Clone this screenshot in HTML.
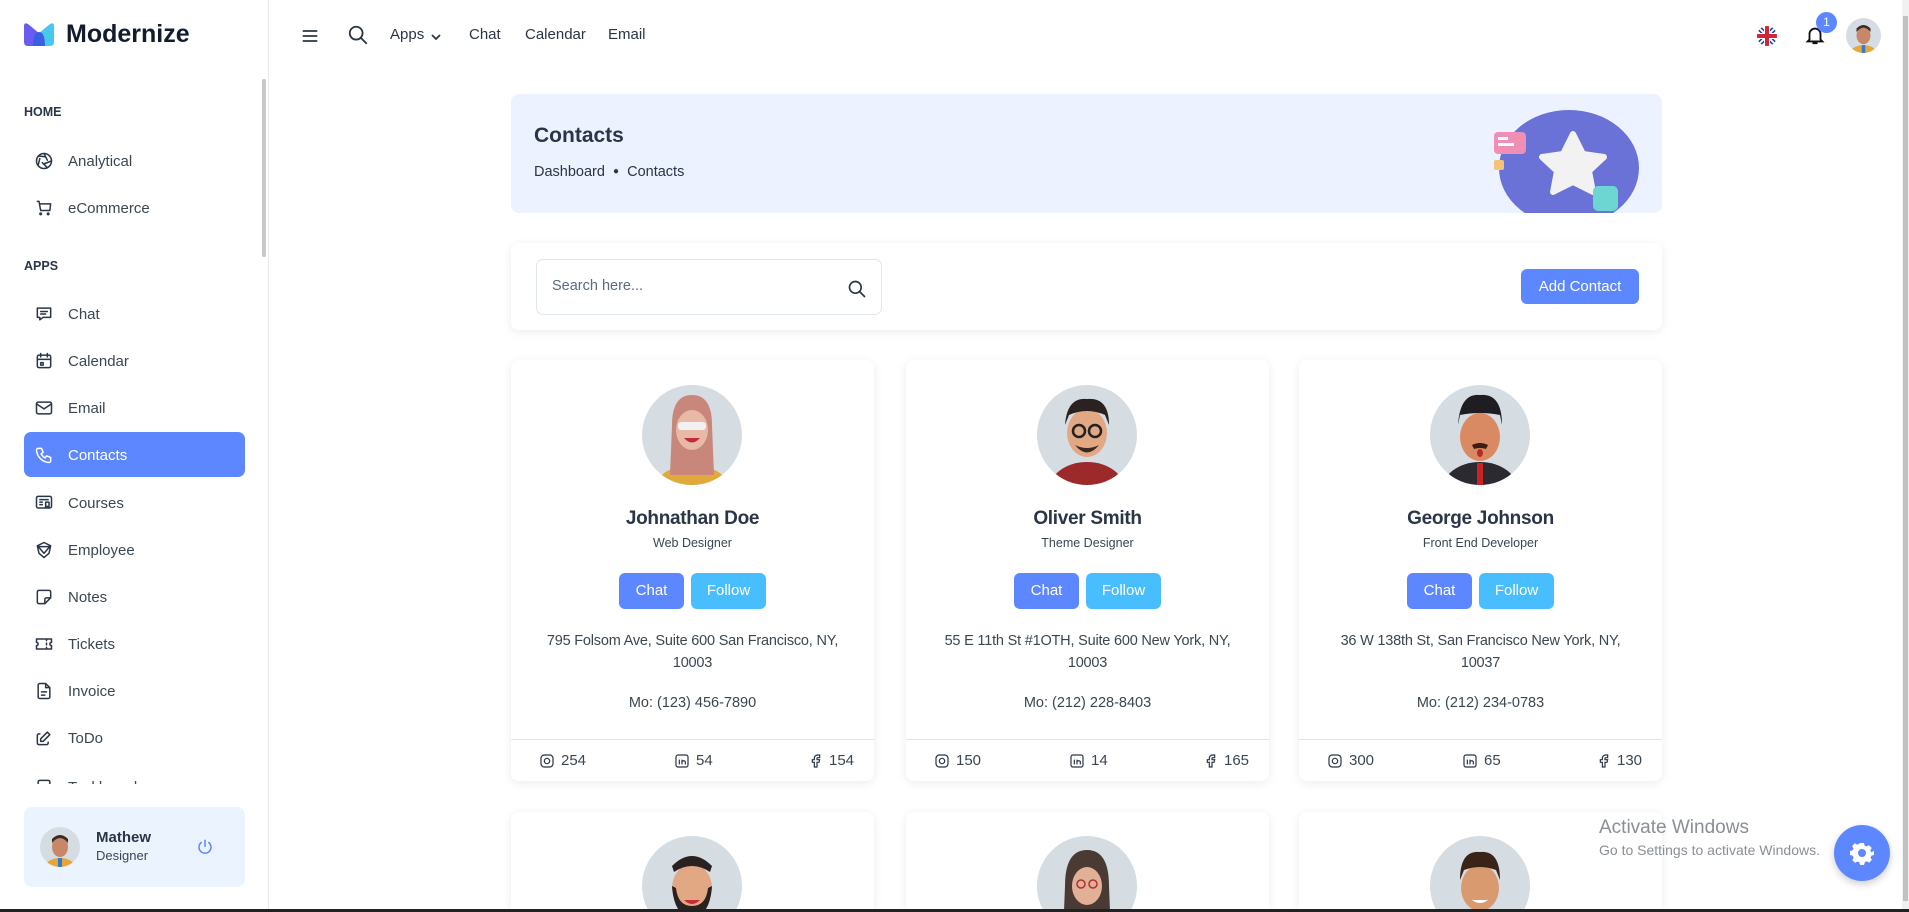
<!DOCTYPE html>
<html style="width:1909px;height:912px;overflow:hidden"><head><meta charset="utf-8"><style>
*{margin:0;padding:0;box-sizing:border-box}
body{width:1909px;height:912px;overflow:hidden;background:#fff;font-family:"Liberation Sans",sans-serif;color:#2a3547;position:relative}
.a{position:absolute}
.side{left:0;top:0;width:269px;height:909px;border-right:1px solid #e5eaef;background:#fff}
.nav{left:34px;font-size:15px;color:#3a4752;display:flex;align-items:center;gap:14px;height:24px}
.nav svg{width:20px;height:20px;fill:none;stroke:#2a3547;stroke-width:1.8;stroke-linecap:round;stroke-linejoin:round}
.cap{left:24px;font-size:12.5px;font-weight:bold;color:#2a3547}
.top{font-size:15px;color:#2a3547;top:26px}
.card{background:#fff;border-radius:8px;box-shadow:0 2px 10px rgba(0,0,0,.08)}
.c{width:363px;height:421px;top:360px}
.av{position:absolute;left:131px;top:25px;width:100px;height:100px;border-radius:50%;background:#d5dde3;overflow:hidden}
.nm{position:absolute;top:148px;width:100%;text-align:center;font-size:19px;font-weight:bold;color:#2a3547;letter-spacing:-0.3px}
.rl{position:absolute;top:176px;width:100%;text-align:center;font-size:12.5px;color:#3a4752}
.bt{position:absolute;top:213px;height:36px;border-radius:6px;color:#fff;font-size:15px;text-align:center;line-height:36px}
.ad{position:absolute;top:270px;left:20px;right:20px;text-align:center;font-size:14.5px;line-height:22px;color:#3a4752;letter-spacing:-0.2px}
.mo{position:absolute;top:335px;width:100%;text-align:center;font-size:14.5px;color:#3a4752}
.ft{position:absolute;top:379px;left:0;right:0;height:42px;border-top:1px solid #e0e6eb;font-size:15px;color:#3a4752}
.ft span{position:absolute;top:12px;display:flex;align-items:center;gap:6px}
.ft svg{width:16px;height:16px;fill:none;stroke:#2a3547;stroke-width:1.8}
.c2{width:363px;height:97px;top:812px;border-radius:8px 8px 0 0;overflow:hidden}
.av2{position:absolute;left:131px;top:24px;width:100px;height:100px;border-radius:50%;background:#d5dde3;overflow:hidden}
</style></head><body>

<div class="a side">
  <div class="a" style="left:22px;top:22px;width:34px;height:26px">
    <svg width="34" height="26" viewBox="0 0 34 26"><path d="M2 4 Q2 0 6 2 L18 12 L18 24 L6 24 Q2 24 2 20Z" fill="#6a5cf0"/><path d="M32 4 Q32 0 28 2 L16 12 L16 24 L28 24 Q32 24 32 20Z" fill="#49c8ef"/><path d="M11 24 Q11 10 17 10 Q23 10 23 24Z" fill="#3a5fe0"/></svg>
  </div>
  <div class="a" style="left:66px;top:20px;font-size:25px;font-weight:bold;color:#111c2d">Modernize</div>
  <div class="a" style="left:262px;top:79px;width:4px;height:178px;background:#c9c9c9;border-radius:2px"></div>
  <div class="a cap" style="top:105px">HOME</div>
  <div class="a nav" style="top:149px"><svg viewBox="0 0 24 24"><circle cx="12" cy="12" r="9"/><path d="M12 3l4 8M21 12l-8 3M16 20l-6-6M5 17l2-8M6 6l8 1"/></svg>Analytical</div>
  <div class="a nav" style="top:196px"><svg viewBox="0 0 24 24"><path d="M4 4h2l2 11h11l1-8H7M9 19a1 1 0 1 0 0 .1M18 19a1 1 0 1 0 0 .1"/></svg>eCommerce</div>
  <div class="a cap" style="top:259px">APPS</div>
  <div class="a nav" style="top:302px"><svg viewBox="0 0 24 24"><path d="M4 5h16v11h-9l-4 3v-3H4zM8 9h8M8 12h6"/></svg>Chat</div>
  <div class="a nav" style="top:349px"><svg viewBox="0 0 24 24"><rect x="4" y="5" width="16" height="15" rx="2"/><path d="M8 3v4M16 3v4M4 10h16M8 14h3v3H8z"/></svg>Calendar</div>
  <div class="a nav" style="top:396px"><svg viewBox="0 0 24 24"><rect x="3" y="5" width="18" height="14" rx="2"/><path d="M3 7l9 6 9-6"/></svg>Email</div>
  <div class="a" style="left:24px;top:432px;width:221px;height:45px;background:#5d87ff;border-radius:7px"></div>
  <div class="a nav" style="top:443px;color:#fff"><svg viewBox="0 0 24 24" style="stroke:#fff"><path d="M5 4h4l2 5-2.5 1.5a11 11 0 0 0 5 5L15 13l5 2v4a2 2 0 0 1-2 2A16 16 0 0 1 3 6a2 2 0 0 1 2-2"/></svg>Contacts</div>
  <div class="a nav" style="top:491px"><svg viewBox="0 0 24 24"><rect x="3" y="4" width="18" height="14" rx="2"/><path d="M7 8h10M7 11h3M7 14h3M14 11h4v6l-2-1-2 1z"/></svg>Courses</div>
  <div class="a nav" style="top:538px"><svg viewBox="0 0 24 24"><path d="M12 3l8 4-2 9-6 5-6-5-2-9zM5 8l14 0M6 9l6 7 6-7"/></svg>Employee</div>
  <div class="a nav" style="top:585px"><svg viewBox="0 0 24 24"><path d="M13 20H6a2 2 0 0 1-2-2V6a2 2 0 0 1 2-2h12a2 2 0 0 1 2 2v7l-7 7v-5a2 2 0 0 1 2-2h5"/></svg>Notes</div>
  <div class="a nav" style="top:632px"><svg viewBox="0 0 24 24"><path d="M3 6h18v4a2 2 0 0 0 0 4v4H3v-4a2 2 0 0 0 0-4zM15 6v2M15 11v2M15 16v2"/></svg>Tickets</div>
  <div class="a nav" style="top:679px"><svg viewBox="0 0 24 24"><path d="M14 3H7a2 2 0 0 0-2 2v14a2 2 0 0 0 2 2h10a2 2 0 0 0 2-2V8zM14 3v5h5M9 13h6M9 17h4"/></svg>Invoice</div>
  <div class="a nav" style="top:726px"><svg viewBox="0 0 24 24"><path d="M7 7H6a2 2 0 0 0-2 2v9a2 2 0 0 0 2 2h9a2 2 0 0 0 2-2v-1M16 5l3 3-8 8H8v-3z"/></svg>ToDo</div>
  <div class="a" style="left:24px;top:775px;width:220px;height:9px;overflow:hidden"><div class="nav" style="position:absolute;left:10px;top:0">
    <svg viewBox="0 0 24 24"><rect x="5" y="4" width="14" height="16" rx="2"/></svg>Taskboard</div></div>
  <div class="a" style="left:24px;top:807px;width:221px;height:80px;background:#ebf3fe;border-radius:8px">
    <div class="a" style="left:16px;top:20px;width:40px;height:40px;border-radius:50%;background:#d5dde3;overflow:hidden">
      <svg width="40" height="40" viewBox="0 0 40 40"><ellipse cx="20" cy="40" rx="15" ry="9" fill="#e7a63a"/><rect x="18" y="31" width="4" height="9" fill="#2e7bd6"/><ellipse cx="20" cy="20" rx="8" ry="10" fill="#c9876a"/><path d="M12 16 Q20 6 28 16 L28 12 Q20 4 12 12Z" fill="#3a2a22"/></svg>
    </div>
    <div class="a" style="left:72px;top:22px;font-size:15px;font-weight:bold;color:#2a3547">Mathew</div>
    <div class="a" style="left:72px;top:41px;font-size:13px;color:#3a4752">Designer</div>
    <svg class="a" style="left:172px;top:31px" width="18" height="18" viewBox="0 0 24 24" fill="none" stroke="#5d87ff" stroke-width="2" stroke-linecap="round"><path d="M7 6a8 8 0 1 0 10 0M12 3v8"/></svg>
  </div>
</div>

<svg class="a" style="left:300px;top:26px" width="20" height="20" viewBox="0 0 24 24" fill="none" stroke="#2a3547" stroke-width="2" stroke-linecap="round"><path d="M4 6h16M4 12h16M4 18h16"/></svg>
<svg class="a" style="left:347px;top:24px" width="22" height="22" viewBox="0 0 24 24" fill="none" stroke="#2a3547" stroke-width="2" stroke-linecap="round"><circle cx="10" cy="10" r="7"/><path d="M15 15l6 6"/></svg>
<div class="a top" style="left:390px">Apps</div>
<svg class="a" style="left:430px;top:32px" width="12" height="10" viewBox="0 0 12 10" fill="none" stroke="#2a3547" stroke-width="1.8"><path d="M2 3l4 4 4-4"/></svg>
<div class="a top" style="left:469px">Chat</div>
<div class="a top" style="left:525px">Calendar</div>
<div class="a top" style="left:608px">Email</div>
<svg class="a" style="left:1756px;top:25px" width="22" height="22" viewBox="0 0 22 22"><defs><clipPath id="fc"><circle cx="11" cy="11" r="10"/></clipPath></defs><g clip-path="url(#fc)"><rect width="22" height="22" fill="#fff"/><path d="M0 0L22 22M22 0L0 22" stroke="#1a3a9a" stroke-width="5"/><path d="M0 0L22 22M22 0L0 22" stroke="#fff" stroke-width="2"/><rect x="8" y="0" width="6" height="22" fill="#fff"/><rect x="0" y="8" width="22" height="6" fill="#fff"/><rect x="9" y="0" width="4" height="22" fill="#d4243a"/><rect x="0" y="9" width="22" height="4" fill="#d4243a"/></g></svg>
<svg class="a" style="left:1804px;top:24px" width="22" height="22" viewBox="0 0 24 24" fill="none" stroke="#111" stroke-width="2" stroke-linecap="round"><path d="M6 17V11a6 6 0 0 1 12 0v6l2 2H4zM10 21h4"/></svg>
<div class="a" style="left:1816px;top:12px;width:21px;height:21px;border-radius:50%;background:#5d87ff;color:#fff;font-size:12px;text-align:center;line-height:21px">1</div>
<div class="a" style="left:1846px;top:18px;width:35px;height:35px;border-radius:50%;background:#d5dde3;overflow:hidden">
  <svg width="35" height="35" viewBox="0 0 40 40"><ellipse cx="20" cy="40" rx="15" ry="9" fill="#e7a63a"/><rect x="18" y="31" width="4" height="9" fill="#2e7bd6"/><ellipse cx="20" cy="20" rx="8" ry="10" fill="#c9876a"/><path d="M12 16 Q20 6 28 16 L28 12 Q20 4 12 12Z" fill="#3a2a22"/></svg>
</div>
<div class="a" style="left:1902px;top:0;width:7px;height:909px;background:#f1f1f1"></div>
<div class="a" style="left:1903px;top:16px;width:5px;height:885px;background:#c1c1c1"></div>

<div class="a" style="left:511px;top:94px;width:1151px;height:119px;background:#ecf2ff;border-radius:8px;overflow:hidden">
  <div class="a" style="left:23px;top:30px;font-size:21px;font-weight:bold;color:#2a3547">Contacts</div>
  <div class="a" style="left:23px;top:70px;font-size:14.5px;color:#2a3547">Dashboard &nbsp;<span style="font-size:10px;vertical-align:2px">&#9679;</span>&nbsp; Contacts</div>
  <svg class="a" style="left:965px;top:10px" width="180" height="110" viewBox="0 0 180 110"><ellipse cx="93" cy="64" rx="70" ry="58" fill="#6a72d8"/><path d="M97 30l10 20 21 3-15 14 4 21-20-10-20 10 4-21-15-14 21-3z" fill="#f2f2f2" stroke="#f2f2f2" stroke-width="6" stroke-linejoin="round"/><rect x="18" y="28" width="32" height="22" rx="4" fill="#ef8fb5"/><rect x="22" y="33" width="10" height="3" fill="#fff"/><rect x="22" y="39" width="16" height="3" fill="#fff"/><rect x="18" y="56" width="10" height="10" rx="2" fill="#f5c27a"/><rect x="117" y="82" width="25" height="25" rx="5" fill="#6ed6d2"/></svg>
</div>

<div class="a card" style="left:511px;top:243px;width:1151px;height:87px">
  <div class="a" style="left:25px;top:16px;width:346px;height:56px;border:1px solid #dfe5ef;border-radius:7px">
    <div class="a" style="left:15px;top:18px;font-size:14.5px;color:#5a6a85">Search here...</div>
    <svg class="a" style="left:310px;top:19px" width="20" height="20" viewBox="0 0 24 24" fill="none" stroke="#2a3547" stroke-width="2" stroke-linecap="round"><circle cx="10" cy="10" r="7"/><path d="M15 15l6 6"/></svg>
  </div>
  <div class="a" style="left:1010px;top:26px;width:118px;height:35px;border-radius:6px;background:#5d87ff;color:#fff;font-size:15px;text-align:center;line-height:35px">Add Contact</div>
</div>

<div class="a card c" style="left:511px">
  <div class="av"><svg width="100" height="100" viewBox="0 0 100 100"><ellipse cx="50" cy="105" rx="38" ry="25" fill="#e0a93a"/><path d="M30 40 Q30 10 50 10 Q70 10 70 40 L72 90 L28 90Z" fill="#c8877a"/><ellipse cx="50" cy="45" rx="16" ry="20" fill="#e7b9a6"/><rect x="36" y="37" width="28" height="8" rx="3" fill="#f1f1f1"/><path d="M42 53 Q50 62 58 53Z" fill="#c42a3d"/></svg></div>
  <div class="nm">Johnathan Doe</div><div class="rl">Web Designer</div>
  <div class="bt" style="left:108px;width:65px;background:#5d87ff">Chat</div>
  <div class="bt" style="left:180px;width:75px;background:#49beff">Follow</div>
  <div class="ad">795 Folsom Ave, Suite 600 San Francisco, NY,<br>10003</div>
  <div class="mo">Mo: (123) 456-7890</div>
  <div class="ft"><span style="left:28px"><svg viewBox="0 0 24 24"><rect x="3" y="3" width="18" height="18" rx="5"/><circle cx="12" cy="12" r="4"/></svg>254</span><span style="left:163px"><svg viewBox="0 0 24 24"><rect x="3" y="3" width="18" height="18" rx="3"/><path d="M8 10v7M8 7v.1M12 17v-7M12 13a3 3 0 0 1 5 0v4"/></svg>54</span><span style="left:296px"><svg viewBox="0 0 24 24"><path d="M8 10v4h3v7h4v-7h3l1-4h-4V8a1 1 0 0 1 1-1h3V3h-3a5 5 0 0 0-5 5v2z"/></svg>154</span></div>
</div>
<div class="a card c" style="left:906px">
  <div class="av"><svg width="100" height="100" viewBox="0 0 100 100"><ellipse cx="50" cy="105" rx="38" ry="28" fill="#9c2a2a"/><ellipse cx="50" cy="48" rx="20" ry="24" fill="#e2a883"/><path d="M28 40 Q30 12 50 14 Q72 12 72 40 L68 30 Q50 22 32 30Z" fill="#2a2220"/><circle cx="42" cy="46" r="6" fill="none" stroke="#222" stroke-width="2.5"/><circle cx="58" cy="46" r="6" fill="none" stroke="#222" stroke-width="2.5"/><path d="M38 60 Q50 75 62 60 Q50 66 38 60" fill="#3a2a22"/></svg></div>
  <div class="nm">Oliver Smith</div><div class="rl">Theme Designer</div>
  <div class="bt" style="left:108px;width:65px;background:#5d87ff">Chat</div>
  <div class="bt" style="left:180px;width:75px;background:#49beff">Follow</div>
  <div class="ad">55 E 11th St #1OTH, Suite 600 New York, NY,<br>10003</div>
  <div class="mo">Mo: (212) 228-8403</div>
  <div class="ft"><span style="left:28px"><svg viewBox="0 0 24 24"><rect x="3" y="3" width="18" height="18" rx="5"/><circle cx="12" cy="12" r="4"/></svg>150</span><span style="left:163px"><svg viewBox="0 0 24 24"><rect x="3" y="3" width="18" height="18" rx="3"/><path d="M8 10v7M8 7v.1M12 17v-7M12 13a3 3 0 0 1 5 0v4"/></svg>14</span><span style="left:296px"><svg viewBox="0 0 24 24"><path d="M8 10v4h3v7h4v-7h3l1-4h-4V8a1 1 0 0 1 1-1h3V3h-3a5 5 0 0 0-5 5v2z"/></svg>165</span></div>
</div>
<div class="a card c" style="left:1299px">
  <div class="av"><svg width="100" height="100" viewBox="0 0 100 100"><ellipse cx="50" cy="105" rx="38" ry="28" fill="#2a2a30"/><rect x="47" y="78" width="6" height="22" fill="#c22"/><ellipse cx="50" cy="52" rx="20" ry="24" fill="#d98a62"/><path d="M28 40 Q30 8 50 10 Q72 8 72 40 L70 30 Q50 26 30 30Z" fill="#1d1d22"/><path d="M42 60 Q50 56 58 60 L56 64 Q50 62 44 64Z" fill="#3a2010"/><ellipse cx="50" cy="68" rx="3" ry="4" fill="#b82a2a"/></svg></div>
  <div class="nm">George Johnson</div><div class="rl">Front End Developer</div>
  <div class="bt" style="left:108px;width:65px;background:#5d87ff">Chat</div>
  <div class="bt" style="left:180px;width:75px;background:#49beff">Follow</div>
  <div class="ad">36 W 138th St, San Francisco New York, NY,<br>10037</div>
  <div class="mo">Mo: (212) 234-0783</div>
  <div class="ft"><span style="left:28px"><svg viewBox="0 0 24 24"><rect x="3" y="3" width="18" height="18" rx="5"/><circle cx="12" cy="12" r="4"/></svg>300</span><span style="left:163px"><svg viewBox="0 0 24 24"><rect x="3" y="3" width="18" height="18" rx="3"/><path d="M8 10v7M8 7v.1M12 17v-7M12 13a3 3 0 0 1 5 0v4"/></svg>65</span><span style="left:296px"><svg viewBox="0 0 24 24"><path d="M8 10v4h3v7h4v-7h3l1-4h-4V8a1 1 0 0 1 1-1h3V3h-3a5 5 0 0 0-5 5v2z"/></svg>130</span></div>
</div>

<div class="a card c2" style="left:511px"><div class="av2"><svg width="100" height="100" viewBox="0 0 100 100"><ellipse cx="50" cy="52" rx="20" ry="24" fill="#e2a883"/><path d="M30 30 Q50 10 70 30 L68 36 Q50 24 32 36Z" fill="#2a2220"/><path d="M30 50 Q32 80 50 82 Q68 80 70 50 L66 52 Q64 70 50 70 Q36 70 34 52Z" fill="#2a2220"/><path d="M42 64 Q50 72 58 64Z" fill="#c42a3d"/></svg></div></div>
<div class="a card c2" style="left:906px"><div class="av2"><svg width="100" height="100" viewBox="0 0 100 100"><path d="M28 50 Q28 14 50 14 Q72 14 72 50 L74 100 L26 100Z" fill="#4a3a34"/><ellipse cx="50" cy="50" rx="15" ry="19" fill="#e2b096"/><circle cx="44" cy="48" r="4" fill="none" stroke="#a33" stroke-width="1.5"/><circle cx="56" cy="48" r="4" fill="none" stroke="#a33" stroke-width="1.5"/></svg></div></div>
<div class="a card c2" style="left:1299px"><div class="av2"><svg width="100" height="100" viewBox="0 0 100 100"><ellipse cx="50" cy="105" rx="36" ry="25" fill="#e2a060"/><ellipse cx="50" cy="52" rx="19" ry="23" fill="#d99a70"/><path d="M30 44 Q30 14 50 16 Q70 14 70 44 L66 34 Q50 28 34 34Z" fill="#3a2418"/><path d="M42 64 Q50 70 58 64Z" fill="#fff"/></svg></div></div>

<div class="a" style="left:1599px;top:817px;font-size:19px;color:#8a8f96">Activate Windows</div>
<div class="a" style="left:1599px;top:842px;font-size:14px;color:#8a8f96">Go to Settings to activate Windows.</div>
<div class="a" style="left:1834px;top:825px;width:56px;height:56px;border-radius:50%;background:#5d87ff;box-shadow:0 3px 8px rgba(0,0,0,.2)">
  <svg style="position:absolute;left:16px;top:16px" width="24" height="24" viewBox="0 0 24 24" fill="#fff"><path d="M10 2h4l.6 2.6 2 .9 2.3-1.4 2.8 2.8-1.4 2.3.9 2L24 10v4l-2.6.6-.9 2 1.4 2.3-2.8 2.8-2.3-1.4-2 .9L14 24h-4l-.6-2.6-2-.9-2.3 1.4-2.8-2.8 1.4-2.3-.9-2L0 14v-4l2.6-.6.9-2L2.1 5.1l2.8-2.8 2.3 1.4 2-.9zM12 8a4 4 0 1 0 0 8 4 4 0 0 0 0-8z"/></svg>
</div>
<div class="a" style="left:0;top:909px;width:1909px;height:3px;background:#222"></div>
</body></html>
